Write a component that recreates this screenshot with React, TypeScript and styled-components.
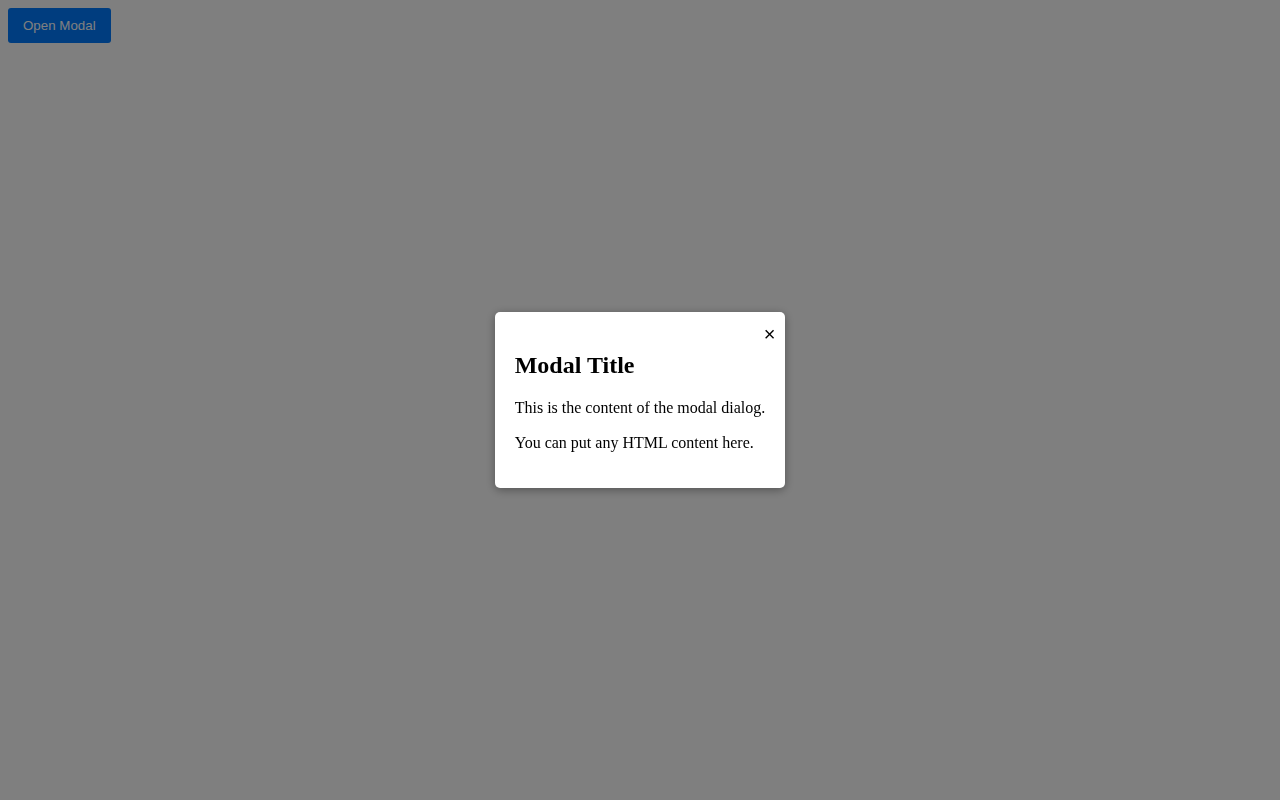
import { useState } from 'react';
import styled, { createGlobalStyle } from 'styled-components';

const GlobalStyle = createGlobalStyle`
	body {
		margin: 8px;
		font-family: 'Liberation Serif', 'Times New Roman', serif;
		background: #fff;
	}
`;

const OpenButton = styled.button`
	padding: 10px 15px;

	font-family: 'Liberation Sans', Arial, sans-serif;
	font-size: 13.333px;
	color: #fff;
	background-color: #007bff;

	border: none;
	border-radius: 3px;
	cursor: pointer;
`;

const Overlay = styled.div`
	position: fixed;
	inset: 0;

	display: flex;
	justify-content: center;
	align-items: center;

	background-color: rgba(0, 0, 0, 0.5);
`;

const Dialog = styled.div`
	position: relative;

	padding: 20px;

	background-color: #fff;
	border-radius: 5px;
	box-shadow: 0 2px 10px rgba(0, 0, 0, 0.35);
`;

const CloseButton = styled.button`
	position: absolute;
	top: 12px;
	right: 10px;

	padding: 0;

	font-family: 'Liberation Sans', Arial, sans-serif;
	font-size: 20px;
	line-height: 1;
	color: #000;
	background: none;

	border: none;
	cursor: pointer;
`;

const Title = styled.h2`
	margin: 0.83em 0;
	font-size: 1.5em;
`;

const Text = styled.p`
	margin: 1em 0;
	font-size: 16px;
	line-height: 19px;
`;

const App = () => {
	const [open, setOpen] = useState<boolean>(true);

	return (
		<>
			<GlobalStyle />
			<OpenButton onClick={() => setOpen(true)}>Open Modal</OpenButton>
			{open && (
				<Overlay onClick={() => setOpen(false)}>
					<Dialog onClick={(e) => e.stopPropagation()}>
						<CloseButton onClick={() => setOpen(false)}>&times;</CloseButton>
						<Title>Modal Title</Title>
						<Text>This is the content of the modal dialog.</Text>
						<Text>You can put any HTML content here.</Text>
					</Dialog>
				</Overlay>
			)}
		</>
	);
};

export default App;
